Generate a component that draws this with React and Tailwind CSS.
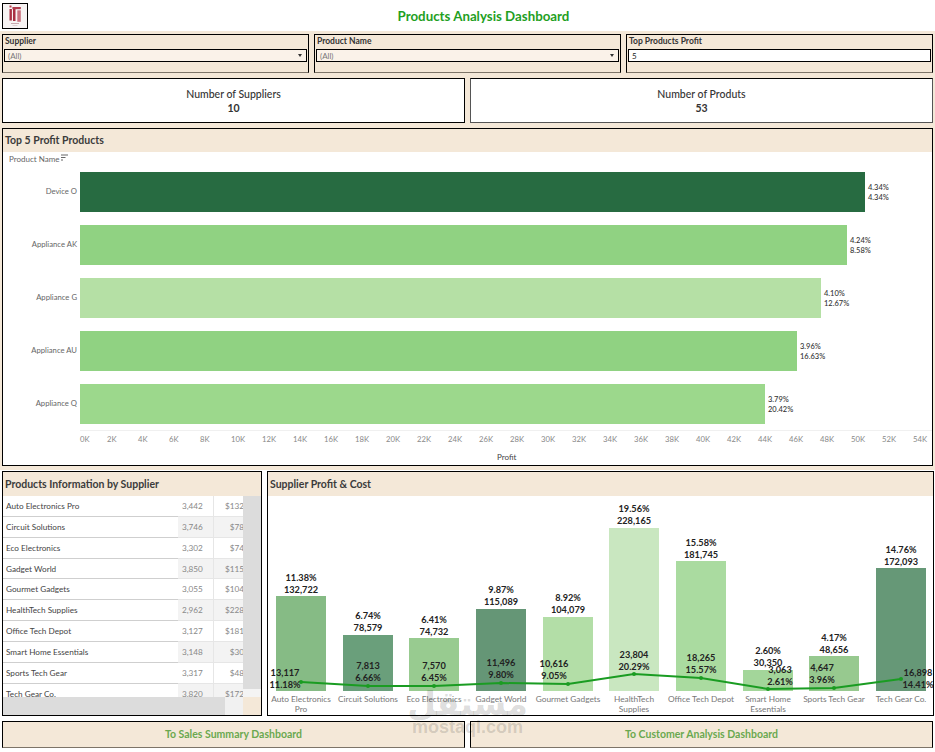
import React from 'react';

const FONT = "font-['Lato','Open_Sans',sans-serif]";

const TOP_PRODUCTS = [
  { name: 'Device O', width: 785, color: 'bg-[#276b41]', a: '4.34%', b: '4.34%' },
  { name: 'Appliance AK', width: 767, color: 'bg-[#90d282]', a: '4.24%', b: '8.58%' },
  { name: 'Appliance G', width: 741, color: 'bg-[#b5e0a5]', a: '4.10%', b: '12.67%' },
  { name: 'Appliance AU', width: 717, color: 'bg-[#90d282]', a: '3.96%', b: '16.63%' },
  { name: 'Appliance Q', width: 685, color: 'bg-[#9cd88c]', a: '3.79%', b: '20.42%' },
];

const TICKS = Array.from({ length: 28 }, (_, i) => `${i * 2}K`);

const SUPPLIERS = [
  { name: 'Auto Electronics Pro', qty: '3,442', money: '$132,722' },
  { name: 'Circuit Solutions', qty: '3,746', money: '$78,579' },
  { name: 'Eco Electronics', qty: '3,302', money: '$74,732' },
  { name: 'Gadget World', qty: '3,850', money: '$115,089' },
  { name: 'Gourmet Gadgets', qty: '3,055', money: '$104,079' },
  { name: 'HealthTech Supplies', qty: '2,962', money: '$228,165' },
  { name: 'Office Tech Depot', qty: '3,127', money: '$181,745' },
  { name: 'Smart Home Essentials', qty: '3,148', money: '$30,350' },
  { name: 'Sports Tech Gear', qty: '3,317', money: '$48,656' },
  { name: 'Tech Gear Co.', qty: '3,820', money: '$172,093' },
];

// coordinates are relative to the plot svg (origin at page 268,496)
const OX = 268;
const OY = 496;
const BARS = [
  { x: 276, top: 596, color: '#86bb85', cx: 301, cost: ['11.38%', '132,722'], costY: 578, profit: ['13,117', '11.18%'], px: 285, py: 673, ly: 682, label: ['Auto Electronics', 'Pro'] },
  { x: 343, top: 635, color: '#6a9f7b', cx: 368, cost: ['6.74%', '78,579'], costY: 616, profit: ['7,813', '6.66%'], px: 368, py: 666, ly: 686, label: ['Circuit Solutions'] },
  { x: 409, top: 638, color: '#98cb90', cx: 434, cost: ['6.41%', '74,732'], costY: 620, profit: ['7,570', '6.45%'], px: 434, py: 666, ly: 686, label: ['Eco Electronics'] },
  { x: 476, top: 609, color: '#659676', cx: 501, cost: ['9.87%', '115,089'], costY: 590, profit: ['11,496', '9.80%'], px: 501, py: 663, ly: 683, label: ['Gadget World'] },
  { x: 543, top: 617, color: '#b3dea7', cx: 568, cost: ['8.92%', '104,079'], costY: 598, profit: ['10,616', '9.05%'], px: 554, py: 664, ly: 684, label: ['Gourmet Gadgets'] },
  { x: 609, top: 528, color: '#c9e7c0', cx: 634, cost: ['19.56%', '228,165'], costY: 509, profit: ['23,804', '20.29%'], px: 634, py: 655, ly: 674, label: ['HealthTech', 'Supplies'] },
  { x: 676, top: 561, color: '#aadba0', cx: 701, cost: ['15.58%', '181,745'], costY: 543, profit: ['18,265', '15.57%'], px: 701, py: 658, ly: 678, label: ['Office Tech Depot'] },
  { x: 743, top: 670, color: '#a3d69a', cx: 768, cost: ['2.60%', '30,350'], costY: 651, profit: ['3,063', '2.61%'], px: 780, py: 670, ly: 689, label: ['Smart Home', 'Essentials'] },
  { x: 809, top: 656, color: '#97c98f', cx: 834, cost: ['4.17%', '48,656'], costY: 638, profit: ['4,647', '3.96%'], px: 822, py: 668, ly: 688, label: ['Sports Tech Gear'] },
  { x: 876, top: 568, color: '#669877', cx: 901, cost: ['14.76%', '172,093'], costY: 550, profit: ['16,898', '14.41%'], px: 918, py: 673, ly: 679, label: ['Tech Gear Co.'] },
];

function Logo() {
  return (
    <div className="ml-[2px] mt-[3px] h-[26px] w-[26px] border border-black bg-[#f7f3f3]">
      <svg viewBox="0 0 24 24" className="h-full w-full">
        <rect x="6.5" y="1.5" width="2" height="2" fill="#b5404f" />
        <rect x="6.5" y="5" width="2.4" height="11.5" fill="#a92f42" />
        <rect x="9.4" y="3" width="8.4" height="2.2" fill="#b03a4c" />
        <rect x="10" y="5" width="2.5" height="12" fill="#a92f42" />
        <rect x="14.3" y="6.3" width="3.5" height="11.5" fill="#c9707e" />
        <rect x="8" y="19" width="8" height="1" fill="#c9a9ae" />
        <rect x="9.5" y="21" width="5" height="1" fill="#ddd0d2" />
      </svg>
    </div>
  );
}

function Filter({ label, value, arrow, inputClass }) {
  return (
    <div className="h-[39px] flex-1 border border-black border-b-[#7d7468] bg-[#f4e8d8] px-[1px]">
      <p className="h-[12px] pl-[1px] text-[8.5px] font-bold leading-[12px] text-[#333]">{label}</p>
      <div className={`mt-[2px] flex h-[13px] items-center justify-between border border-black pl-[3px] pr-[4px] text-[8px] ${inputClass}`}>
        <span>{value}</span>
        {arrow ? <span className="h-0 w-0 border-x-[2.5px] border-t-[3px] border-x-transparent border-t-[#333]" /> : null}
      </div>
    </div>
  );
}

function Kpi({ label, value, borderClass }) {
  return (
    <div className={`flex h-[45px] flex-1 flex-col items-center justify-center border bg-white text-[#333] ${borderClass}`}>
      <p className="text-[10.5px] font-medium leading-[14px]">{label}</p>
      <p className="text-[10.5px] font-bold leading-[14px]">{value}</p>
    </div>
  );
}

function PanelTitle({ children, heightClass }) {
  return <h2 className={`flex items-center bg-[#f4e8d8] pl-[2px] pt-[1px] text-[10.5px] font-bold text-[#3b3b3b] ${heightClass}`}>{children}</h2>;
}

function ProductsChart() {
  return (
    <section className="mt-[5px] flex h-[338px] flex-col border border-black bg-white">
      <PanelTitle heightClass="h-[23px]">Top 5 Profit Products</PanelTitle>
      <div className="flex h-[20px] items-start gap-[2px] pl-[6px] text-[8px] leading-[14px] text-[#666]">
        <span>Product Name</span>
        <svg width="7" height="7" viewBox="0 0 7 7" stroke="#666" strokeWidth="1" className="mt-[2px]">
          <path d="M0 1h7M0 3.5h4.5M0 6h2" />
        </svg>
      </div>
      <div className="flex flex-col gap-[13px]">
        {TOP_PRODUCTS.map((p) => (
          <div key={p.name} className="flex h-[40px] items-center">
            <span className="w-[77px] pr-[3px] text-right text-[7.7px] text-[#666]">{p.name}</span>
            <div className={`h-full ${p.color}`} style={{ width: p.width }} />
            <div className="ml-[3px] mt-[1px] text-[7.5px] font-medium leading-[10px] text-[#333]">
              <p>{p.a}</p>
              <p>{p.b}</p>
            </div>
          </div>
        ))}
      </div>
      <div className="ml-[77px] mt-[6px] flex h-[19px] items-center border-t border-[#f0f0f0] text-[7.7px] text-[#888]">
        {TICKS.map((t) => (
          <span key={t} className={`shrink-0 ${t === '0K' ? 'w-[27px]' : 'w-[31px]'}`}>{t}</span>
        ))}
      </div>
      <p className="mt-[3px] pl-[494px] text-[8px] leading-[10px] text-[#444]">Profit</p>
    </section>
  );
}

function SupplierTable() {
  return (
    <section className="flex h-[245px] w-[260px] flex-col border border-black bg-[#f4e8d8]">
      <PanelTitle heightClass="h-[24px]">Products Information by Supplier</PanelTitle>
      <div className="flex h-[201px] overflow-hidden">
        <div className="w-[240px] bg-white">
          {SUPPLIERS.map((s, i) => (
            <div key={s.name} className="flex h-[20.85px] text-[8.2px] leading-[20px]">
              <span className="w-[175px] border-b border-[#cfcfcf] pl-[3px] text-[#444]">{s.name}</span>
              <span className={`w-[35px] border-b border-[#e6e6e6] pl-[4px] text-[#888] ${i % 2 ? 'bg-[#f3f3f3]' : 'bg-white'}`}>{s.qty}</span>
              <span className={`w-[30px] overflow-hidden border-b border-l border-[#e6e6e6] text-[#888] ${i % 2 ? 'bg-[#f3f3f3]' : 'bg-white'}`}>
                <span className="block w-[46px] text-right">{s.money}</span>
              </span>
            </div>
          ))}
        </div>
        <div className="flex w-[18px] flex-col">
          <div className="h-[193px] bg-[#dcdcdc]" />
          <div className="h-[8px] bg-[#f4f4f4]" />
        </div>
      </div>
      <div className="flex h-[18px]">
        <div className="w-[222px] bg-[#dcdcdc]" />
        <div className="w-[18px] bg-[#f1f1f1]" />
      </div>
    </section>
  );
}

function SupplierChart() {
  const linePoints = BARS.map((b) => `${b.cx - OX},${b.ly - OY}`).join(' ');
  return (
    <section className="flex h-[245px] flex-1 flex-col border border-black bg-white">
      <PanelTitle heightClass="h-[24px]">Supplier Profit &amp; Cost</PanelTitle>
      <svg width="665" height="219" viewBox="0 0 665 219" className="block">
        {BARS.map((b) => (
          <rect key={b.x} x={b.x - OX} y={b.top - OY} width="50" height={691 - b.top} fill={b.color} />
        ))}
        <polyline points={linePoints} fill="none" stroke="#1a9c22" strokeWidth="2" />
        {BARS.map((b) => (
          <circle key={b.x} cx={b.cx - OX} cy={b.ly - OY} r="2" fill="#1a9c22" />
        ))}
        <g fontSize="9.2" fontWeight="700" fill="#222" textAnchor="middle">
          {BARS.map((b) => (
            <g key={b.x}>
              <text x={b.cx - OX} y={b.costY - OY + 3}>{b.cost[0]}</text>
              <text x={b.cx - OX} y={b.costY + 12 - OY + 3}>{b.cost[1]}</text>
              <text x={b.px - OX} y={b.py - OY + 3}>{b.profit[0]}</text>
              <text x={b.px - OX} y={b.py + 12 - OY + 3}>{b.profit[1]}</text>
            </g>
          ))}
        </g>
        <g fontSize="8.3" fill="#777" textAnchor="middle">
          {BARS.map((b) =>
            b.label.map((line, i) => (
              <text key={line} x={b.cx - OX} y={702 + i * 10 - OY}>{line}</text>
            ))
          )}
        </g>
      </svg>
    </section>
  );
}

function NavButton({ children }) {
  return (
    <div className="flex h-[27px] flex-1 items-center justify-center border border-black border-b-[#7d7468] bg-[#f4e8d8] text-[10.5px] font-bold text-[#6aa84f]">
      {children}
    </div>
  );
}

export default function App() {
  return (
    <div className={`relative h-[752px] w-[935px] overflow-hidden bg-white ${FONT}`}>
      <header className="relative flex h-[31px]">
        <Logo />
        <h1 className="absolute inset-x-0 top-[7px] pl-[32px] text-center text-[13.3px] font-bold leading-[18px] text-[#1fa01f]">
          Products Analysis Dashboard
        </h1>
      </header>
      <div className="bg-[#f4e8d8] px-[2px] pb-[4px] pt-[3px]">
        <div className="flex gap-[5px]">
          <Filter label="Supplier" value="(All)" arrow inputClass="bg-[#faf2e9] text-[#777]" />
          <Filter label="Product Name" value="(All)" arrow inputClass="bg-[#faf2e9] text-[#777]" />
          <Filter label="Top Products Profit" value="5" inputClass="bg-white text-[#222]" />
        </div>
        <div className="mt-[5px] flex gap-[5px]">
          <Kpi label="Number of Suppliers" value="10" borderClass="border-black" />
          <Kpi label="Number of Produts" value="53" borderClass="border-[#555] border-t-black" />
        </div>
        <ProductsChart />
      </div>
      <div className="px-[2px]">
        <div className="mt-[1px] flex gap-[5px]">
          <SupplierTable />
          <SupplierChart />
        </div>
        <div className="mt-[5px] flex gap-[5px]">
          <NavButton>To Sales Summary Dashboard</NavButton>
          <NavButton>To Customer Analysis Dashboard</NavButton>
        </div>
      </div>
      <div className="pointer-events-none absolute left-[400px] top-[689px] flex w-[135px] flex-col items-center text-[#000]/15">
        <span className="font-['DejaVu_Sans',sans-serif] text-[33px] font-bold leading-[29px]">مستقل</span>
        <span className="font-['Liberation_Sans',sans-serif] text-[18px] font-bold leading-[18px]">mostaql.com</span>
      </div>
    </div>
  );
}
